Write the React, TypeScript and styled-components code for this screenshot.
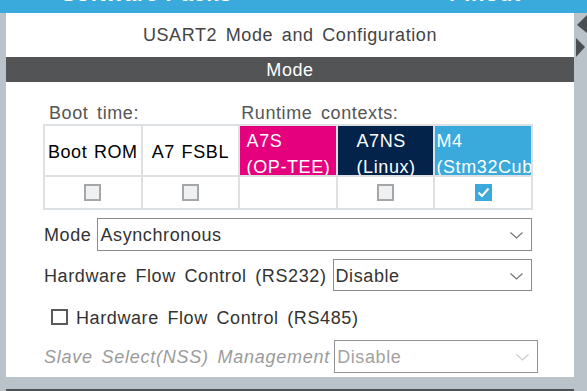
import React from 'react';
import styled, { createGlobalStyle } from 'styled-components';

const Global = createGlobalStyle`
  html, body { margin: 0; padding: 0; }
  body {
    width: 587px;
    height: 391px;
    overflow: hidden;
    background: #b9c3c9;
    font-family: "Liberation Sans", Arial, sans-serif;
  }
`;

const Page = styled.div`
  width: 587px;
  height: 391px;
  display: flex;
  flex-direction: column;
  overflow: hidden;
`;

const TopBar = styled.div`
  height: 13px;
  flex-shrink: 0;
  background: #3aa9db;
  display: flex;
  overflow: hidden;
  color: #fff;
  font-size: 22px;
  font-weight: 700;
  line-height: 22px;
  letter-spacing: 0.6px;
`;

const TopTab = styled.div<{ $ml: string; $mr?: string }>`
  margin-top: -17px;
  margin-left: ${(p) => p.$ml};
  margin-right: ${(p) => p.$mr ?? '0'};
  white-space: nowrap;
`;

const Main = styled.div`
  flex: 1;
  display: flex;
  min-height: 0;
`;

const SideStrip = styled.div<{ $w: number }>`
  width: ${(p) => p.$w}px;
  flex-shrink: 0;
  background: #b9c3c9;
`;

const CenterColumn = styled.div`
  width: 568px;
  flex-shrink: 0;
  display: flex;
  flex-direction: column;
`;

const Panel = styled.div`
  height: 364px;
  flex-shrink: 0;
  background: #fff;
  display: flex;
  flex-direction: column;
`;

const BottomGap = styled.div`
  height: 12px;
  flex-shrink: 0;
`;

const DarkBar = styled.div`
  flex: 1;
  background: #4f5355;
`;

const Title = styled.div`
  height: 44px;
  display: flex;
  align-items: center;
  justify-content: center;
  font-size: 18px;
  letter-spacing: 0.6px;
  word-spacing: 3px;
  color: #444;
`;

const SectionBar = styled.div`
  height: 25px;
  background: #525456;
  color: #fff;
  display: flex;
  align-items: center;
  justify-content: center;
  padding-top: 2px;
  box-sizing: border-box;
  font-size: 18px;
  letter-spacing: 0.6px;
`;

const Body = styled.div`
  padding-left: 37px;
  display: flex;
  flex-direction: column;
  font-size: 18px;
  letter-spacing: 0.6px;
  word-spacing: 3px;
`;

const ContextLabels = styled.div`
  margin-top: 19px;
  height: 23px;
  width: 490px;
  box-sizing: border-box;
  padding: 1px 2px 0;
  display: grid;
  grid-template-columns: repeat(5, 1fr);
  column-gap: 2px;
  align-items: center;
  color: #555;
`;

const ContextLabel = styled.div<{ $span: number; $pad: number }>`
  grid-column: span ${(p) => p.$span};
  padding-left: ${(p) => p.$pad}px;
  white-space: nowrap;
`;

const Table = styled.div`
  width: 490px;
  box-sizing: border-box;
  display: grid;
  grid-template-columns: repeat(5, 1fr);
  grid-template-rows: 49px 31px;
  gap: 2px;
  padding: 2px;
  background: #dde1e4;
`;

const PlainHead = styled.div`
  background: #fff;
  color: #000;
  display: flex;
  align-items: center;
  justify-content: center;
  white-space: nowrap;
  overflow: hidden;
  padding-top: 3px;
  word-spacing: 1px;
`;

const ColorHead = styled.div<{ $bg: string }>`
  background: ${(p) => p.$bg};
  color: #fff;
  overflow: hidden;
  line-height: 26px;
  padding-top: 2px;
`;

const HeadText = styled.div`
  width: max-content;
  margin: 0 auto;
  white-space: pre;
  padding-left: 1px;
`;

const CheckCell = styled.div`
  background: #fff;
  display: flex;
  align-items: center;
  justify-content: center;
`;

const TableCheck = styled.div<{ $checked?: boolean }>`
  width: 17px;
  height: 17px;
  box-sizing: border-box;
  border: ${(p) => (p.$checked ? 'none' : '2px solid #a4a6a8')};
  background: ${(p) => (p.$checked ? '#3aa9db' : '#eff0f2')};
  display: flex;
  align-items: center;
  justify-content: center;
`;

const FormRow = styled.div<{ $mt: number; $h: number; $gap: number; $pl?: number }>`
  margin-top: ${(p) => p.$mt}px;
  height: ${(p) => p.$h}px;
  width: 489px;
  box-sizing: border-box;
  padding-left: ${(p) => 1 + (p.$pl ?? 0)}px;
  display: flex;
  align-items: center;
  gap: ${(p) => p.$gap}px;
`;

const FieldLabel = styled.span<{ $disabled?: boolean }>`
  color: ${(p) => (p.$disabled ? '#9b9b9b' : '#333')};
  font-style: ${(p) => (p.$disabled ? 'italic' : 'normal')};
  letter-spacing: ${(p) => (p.$disabled ? '0.75px' : '0.6px')};
  white-space: nowrap;
  flex-shrink: 0;
  padding-top: 2px;
`;

const Select = styled.div<{ $width?: number; $disabled?: boolean }>`
  ${(p) => (p.$width ? `width: ${p.$width}px; flex-shrink: 0;` : 'flex: 1;')}
  height: 100%;
  box-sizing: border-box;
  border: 1px solid ${(p) => (p.$disabled ? '#8f9397' : '#8c8c8c')};
  background: #fff;
  color: ${(p) => (p.$disabled ? '#a3a3a3' : '#333')};
  display: flex;
  align-items: center;
  justify-content: space-between;
  padding: 2px 8px 0 2px;
  white-space: nowrap;
`;

const BoxCheck = styled.div`
  width: 17px;
  height: 16px;
  box-sizing: border-box;
  border: 2px solid #5a5a5a;
  background: #fff;
  flex-shrink: 0;
`;

const Chevron = ({ color }: { color: string }) => (
  <svg width="13" height="7" viewBox="0 0 13 7">
    <polyline points="0.5,0.5 6.5,6 12.5,0.5" fill="none" stroke={color} strokeWidth="1.1" />
  </svg>
);

const Tick = () => (
  <svg width="13" height="11" viewBox="0 0 13 11">
    <polyline points="1.5,5.5 5,9 11.5,1.5" fill="none" stroke="#fff" strokeWidth="2" />
  </svg>
);

const Arrows = () => (
  <svg width="13" height="60" viewBox="0 0 13 60" style={{ display: 'block' }}>
    <polygon points="3,12 13,2 13,20" fill="#4b4e50" />
    <polygon points="2,25 11,34 2,44" fill="#4b4e50" />
  </svg>
);

export default function App() {
  return (
    <>
      <Global />
      <Page>
        <TopBar>
          <TopTab $ml="61px">Software Packs</TopTab>
          <TopTab $ml="auto" $mr="66px">Pinout</TopTab>
        </TopBar>
        <Main>
          <SideStrip $w={6} />
          <CenterColumn>
            <Panel>
              <Title>USART2 Mode and Configuration</Title>
              <SectionBar>Mode</SectionBar>
              <Body>
                <ContextLabels>
                  <ContextLabel $span={2} $pad={4}>Boot time:</ContextLabel>
                  <ContextLabel $span={3} $pad={1}>Runtime contexts:</ContextLabel>
                </ContextLabels>
                <Table>
                  <PlainHead>Boot ROM</PlainHead>
                  <PlainHead>A7 FSBL</PlainHead>
                  <ColorHead $bg="#e5007d">
                    <HeadText>{'A7S\n(OP-TEE)'}</HeadText>
                  </ColorHead>
                  <ColorHead $bg="#03234b">
                    <HeadText>{'A7NS\n(Linux)'}</HeadText>
                  </ColorHead>
                  <ColorHead $bg="#3aa9db">
                    <HeadText>{'M4\n(Stm32Cube)'}</HeadText>
                  </ColorHead>
                  <CheckCell>
                    <TableCheck />
                  </CheckCell>
                  <CheckCell>
                    <TableCheck />
                  </CheckCell>
                  <CheckCell />
                  <CheckCell>
                    <TableCheck />
                  </CheckCell>
                  <CheckCell>
                    <TableCheck $checked>
                      <Tick />
                    </TableCheck>
                  </CheckCell>
                </Table>
                <FormRow $mt={8} $h={33} $gap={6}>
                  <FieldLabel>Mode</FieldLabel>
                  <Select>
                    <span>Asynchronous</span>
                    <Chevron color="#707070" />
                  </Select>
                </FormRow>
                <FormRow $mt={8} $h={32} $gap={6}>
                  <FieldLabel>Hardware Flow Control (RS232)</FieldLabel>
                  <Select $width={199}>
                    <span>Disable</span>
                    <Chevron color="#707070" />
                  </Select>
                </FormRow>
                <FormRow $mt={8} $h={36} $gap={8} $pl={7}>
                  <BoxCheck />
                  <FieldLabel>Hardware Flow Control (RS485)</FieldLabel>
                </FormRow>
                <FormRow $mt={5} $h={33} $gap={4}>
                  <FieldLabel $disabled>Slave Select(NSS) Management</FieldLabel>
                  <Select $width={204} $disabled>
                    <span>Disable</span>
                    <Chevron color="#cccccc" />
                  </Select>
                </FormRow>
              </Body>
            </Panel>
            <BottomGap />
            <DarkBar />
          </CenterColumn>
          <SideStrip $w={13}>
            <Arrows />
          </SideStrip>
        </Main>
      </Page>
    </>
  );
}
